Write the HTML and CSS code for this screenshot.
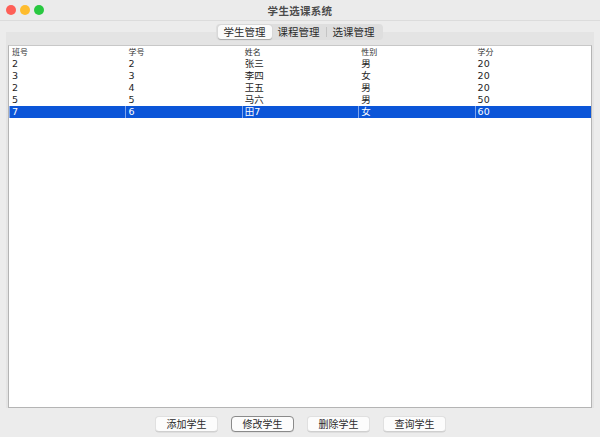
FILE: index.html
```html
<!DOCTYPE html>
<html lang="zh">
<head>
<meta charset="utf-8">
<title>学生选课系统</title>
<link rel="stylesheet" href="styles.css">
</head>
<body>
<div class="window">
  <div class="titlebar">
    <div class="lights">
      <span class="light red"></span>
      <span class="light yellow"></span>
      <span class="light green"></span>
    </div>
    <div class="title">学生选课系统</div>
  </div>
  <div class="tabs-row">
    <div class="tabs">
      <span class="tab active">学生管理</span>
      <span class="tab">课程管理</span>
      <span class="sep"></span>
      <span class="tab">选课管理</span>
    </div>
  </div>
  <div class="pane">
    <div class="table">
      <div class="row head">
        <span class="cell">班号</span><span class="cell">学号</span><span class="cell">姓名</span><span class="cell">性别</span><span class="cell">学分</span>
      </div>
      <div class="row"><span class="cell">2</span><span class="cell">2</span><span class="cell">张三</span><span class="cell">男</span><span class="cell">20</span></div>
      <div class="row"><span class="cell">3</span><span class="cell">3</span><span class="cell">李四</span><span class="cell">女</span><span class="cell">20</span></div>
      <div class="row"><span class="cell">2</span><span class="cell">4</span><span class="cell">王五</span><span class="cell">男</span><span class="cell">20</span></div>
      <div class="row"><span class="cell">5</span><span class="cell">5</span><span class="cell">马六</span><span class="cell">男</span><span class="cell">50</span></div>
      <div class="row selected"><span class="cell">7</span><span class="cell">6</span><span class="cell">田7</span><span class="cell">女</span><span class="cell">60</span></div>
    </div>
  </div>
  <div class="buttons">
    <button class="btn">添加学生</button>
    <button class="btn focused">修改学生</button>
    <button class="btn">删除学生</button>
    <button class="btn">查询学生</button>
  </div>
</div>
</body>
</html>
```
FILE: styles.css
```css
* { box-sizing: border-box; }
html, body { margin: 0; padding: 0; }
body {
  width: 600px;
  height: 437px;
  overflow: hidden;
  background: #ececec;
  font-family: "Noto Sans CJK SC", "Noto Sans", sans-serif;
  color: #1e1e1e;
}
.window {
  width: 600px;
  height: 437px;
  display: flex;
  flex-direction: column;
}
.titlebar {
  height: 21px;
  position: relative;
  display: flex;
  align-items: center;
  justify-content: center;
  border-bottom: 1px solid #dcdcdc;
  background: #ebebeb;
}
.lights {
  position: absolute;
  left: 6px;
  top: 5px;
  display: flex;
  gap: 4px;
}
.light {
  width: 10px;
  height: 10px;
  border-radius: 50%;
  display: block;
}
.red { background: #fe5f57; }
.yellow { background: #febc2e; }
.green { background: #28c840; }
.title {
  font-size: 10.5px;
  font-weight: 700;
  color: #4b4b4b;
  letter-spacing: 0.3px;
}
.tabs-row {
  display: flex;
  justify-content: center;
  margin-top: 3px;
  position: relative;
  z-index: 1;
}
.tabs {
  display: flex;
  align-items: center;
  height: 16px;
  padding: 1px 2px;
  background: #dedede;
  border-radius: 4px;
  margin-left: -2px;
}
.tab {
  font-size: 10.5px;
  line-height: 14px;
  height: 14px;
  padding: 0 6px;
  color: #2a2a2a;
  border-radius: 3px;
  width: 54px;
  text-align: center;
}
.tab.active {
  background: #fafafa;
  box-shadow: 0 0.5px 1px rgba(0,0,0,0.25);
}
.sep {
  width: 1px;
  height: 10px;
  background: #c4c4c4;
}
.pane {
  margin: -8px 6px 0;
  padding: 13px 2px 0;
  background: #e4e4e4;
}
.table {
  height: 363px;
  background: #fff;
  border: 1px solid #b4b4b4;
  border-top-color: #c8c8c8;
}
.row {
  display: grid;
  grid-template-columns: repeat(5, 1fr);
  height: 12px;
}
.cell {
  font-family: "DejaVu Sans", "Noto Sans CJK SC", sans-serif;
  font-size: 9.5px;
  line-height: 12px;
  padding-left: 3px;
  white-space: nowrap;
  overflow: hidden;
}
.head .cell {
  font-family: "Noto Sans CJK SC", sans-serif;
  font-size: 8px;
  color: #333;
}
.row.selected {
  background: #0b55d8;
  color: #fff;
}
.row.selected .cell {
  border-left: 1px solid #7fa5ec;
  padding-left: 2px;
}
.buttons {
  flex: 1;
  display: flex;
  justify-content: center;
  align-items: flex-start;
  gap: 13px;
  padding-top: 8px;
  padding-left: 1px;
}
.btn {
  width: 63px;
  height: 16px;
  padding: 0;
  font-family: inherit;
  font-size: 10px;
  line-height: 14px;
  color: #2a2a2a;
  background: #fcfcfc;
  border: 1px solid #e0e0e0;
  border-bottom-color: #cfcfcf;
  border-radius: 4px;
  box-shadow: 0 0.5px 0.5px rgba(0,0,0,0.12);
}
.btn.focused {
  border: 1px solid #8a8a8a;
}
```
